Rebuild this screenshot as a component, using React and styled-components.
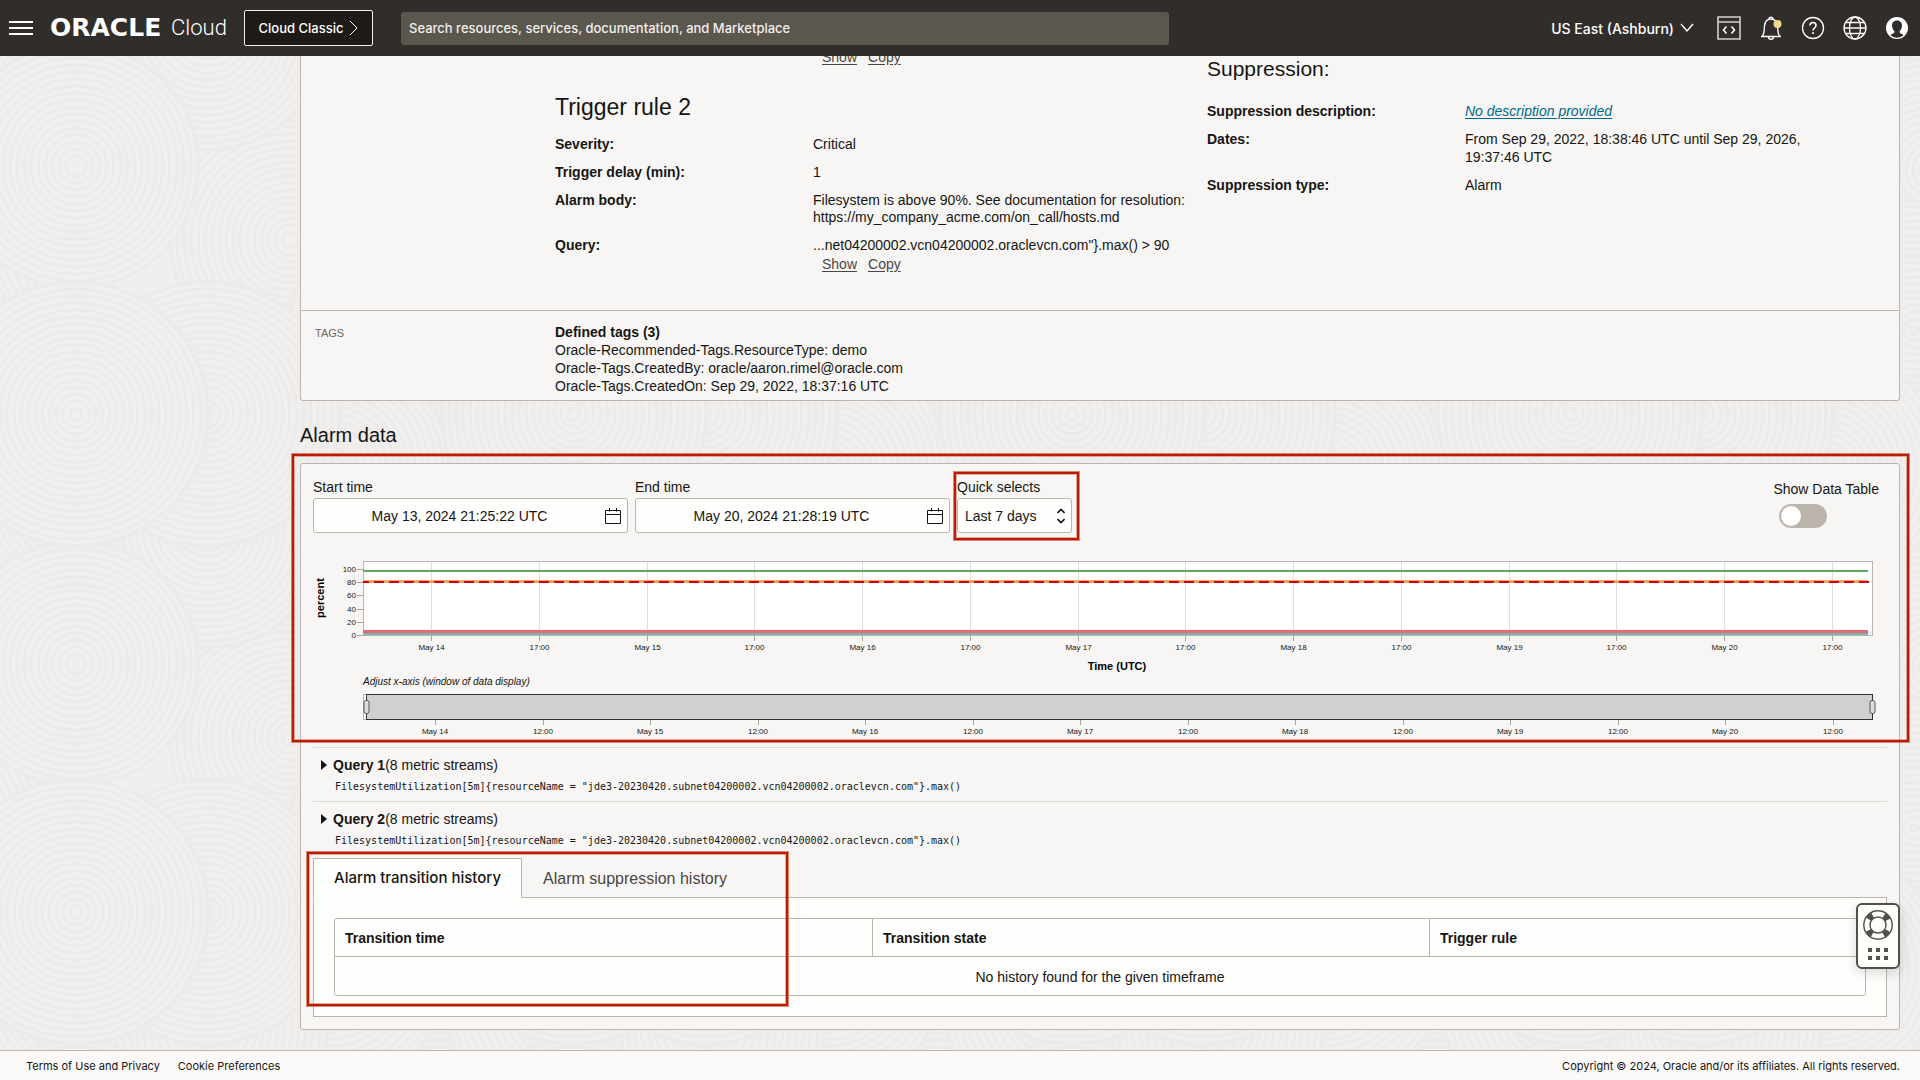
import React from "react";
import styled, { createGlobalStyle, css } from "styled-components";

const GlobalStyle = createGlobalStyle`
  *, *::before, *::after { box-sizing: border-box; }
  body {
    margin: 0;
    background: #f0efed;
    color: #161513;
    font: 14px/17px "Liberation Sans", Arial, sans-serif;
  }
  h1, h2, h3, dl, dd, p { margin: 0; font-weight: 400; }
  button, input, select { font: inherit; color: inherit; }
`;

/* ---------- page frame ---------- */

const Page = styled.div`
  position: relative;
  display: flex;
  flex-direction: column;
  min-height: 100vh;
  overflow: hidden;
`;

const Backdrop = styled.svg`
  position: absolute;
  inset: 0;
  width: 100%;
  height: 100%;
  z-index: -1;
`;

const Header = styled.header`
  position: relative;
  z-index: 2;
  display: flex;
  align-items: center;
  height: 56px;
  padding: 0 11px 0 9px;
  background: #312d2a;
  color: #ffffff;
  font: 500 13px/17px Inter, "Liberation Sans", sans-serif;
`;

const IconButton = styled.button`
  display: flex;
  padding: 0;
  border: 0;
  background: none;
  color: inherit;
  cursor: pointer;
`;

const Brand = styled.a`
  display: flex;
  align-items: center;
  gap: 7px;
  width: 178px;
  margin: 0 16px 0 17px;
  color: inherit;
  text-decoration: none;
`;

const Wordmark = styled.span`
  width: 114px;
  font: 700 25px/28px "DejaVu Sans", sans-serif;
`;

const Product = styled.span`
  font: 300 22px/28px Roboto, "Liberation Sans", sans-serif;
`;

const ClassicButton = styled.button`
  display: flex;
  align-items: center;
  justify-content: center;
  gap: 6px;
  width: 129px;
  height: 36px;
  padding: 0;
  border: 1px solid #f1efed;
  border-radius: 2px;
  background: #1e1a17;
  color: #ffffff;
  white-space: nowrap;
`;

const SearchBox = styled.input`
  flex: 0 1 768px;
  min-width: 0;
  height: 33px;
  margin-left: 28px;
  padding: 0 8px;
  border: 0;
  border-radius: 3px;
  background: #5b564e;
  color: #ffffff;
  &::placeholder { color: #f1efed; opacity: 1; }
`;

const HeaderTools = styled.div`
  display: flex;
  align-items: center;
  gap: 18px;
  margin-left: auto;
`;

const RegionButton = styled.button`
  display: flex;
  align-items: center;
  gap: 6px;
  margin-right: 5px;
  padding: 0;
  border: 0;
  background: none;
  color: inherit;
  font-size: 14px;
`;

const Main = styled.main`
  flex: 1;
  padding: 0 20px 18px 300px;
`;

const Footer = styled.footer`
  display: flex;
  align-items: center;
  gap: 18px;
  height: 30px;
  padding: 0 20px 0 26px;
  border-top: 1px solid #bbb5ae;
  background: #fbf9f8;
  color: #161513;
  font: 11px/16px Inter, sans-serif;
  a { color: inherit; text-decoration: none; }
  p { margin-left: auto; }
`;

/* ---------- details panel ---------- */

const Panel = styled.section`
  border: 1px solid #bbb5ae;
  border-radius: ${(p) => (p.$continued ? "0 0 3px 3px" : "3px")};
  background: #f7f6f4;
  ${(p) => p.$continued && css`border-top: 0; overflow: hidden;`}
  ${(p) => p.$padded && css`padding: 0 12px 12px;`}
`;

const DetailGrid = styled.div`
  display: grid;
  grid-template-columns: 240px 1fr 1fr;
  padding: 0 40px 37px 14px;
`;

const RulesColumn = styled.div`
  grid-column: 2;
`;

const RuleTitle = styled.h2`
  margin: 27px 0 15px;
  font-size: 23px;
  line-height: 28px;
`;

const SectionTitle = styled.h2`
  margin: ${(p) => p.$margin};
  font-size: ${(p) => p.$size || "20px"};
  line-height: 24px;
`;

const Facts = styled.dl`
  display: grid;
  grid-template-columns: 258px 1fr;
  row-gap: ${(p) => (p.$loose ? "10px" : "11px")};
  line-height: ${(p) => (p.$loose ? "18px" : "17px")};
  dt { font-weight: 700; }
`;

const LinkLine = styled.div`
  display: flex;
  gap: 11px;
  margin-top: ${(p) => (p.$clipped ? "-7px" : "2px")};
  padding-left: ${(p) => (p.$clipped ? "267px" : "9px")};
`;

const TextLink = styled.a`
  color: ${(p) => (p.$accent ? "#00688c" : "#4a4642")};
  font-style: ${(p) => (p.$accent ? "italic" : "normal")};
  text-decoration: underline;
  text-underline-offset: 2px;
`;

const TagsRow = styled.div`
  display: grid;
  grid-template-columns: 240px 1fr;
  padding: 12px 14px 5px;
  border-top: 1px solid #bbb5ae;
  line-height: 18px;
`;

const TagsCaption = styled.h3`
  color: #6b6661;
  font-size: 11px;
  line-height: 20px;
`;

/* ---------- alarm data panel ---------- */

const ChartRegion = styled.div`
  position: relative;
`;

const Highlight = styled.div`
  position: absolute;
  border: 2px solid #b91c00;
  box-shadow: 0 0 0 1px rgba(200, 60, 30, 0.6), inset 0 0 0 1px rgba(200, 60, 30, 0.4);
  pointer-events: none;
  z-index: 1;
  inset: ${(p) => p.$inset};
  ${(p) => p.$width && css`width: ${p.$width};`}
`;

const Controls = styled.form`
  display: flex;
  align-items: flex-start;
  gap: 7px;
  padding-top: 14px;
`;

const Field = styled.div`
  position: relative;
  display: flex;
  flex-direction: column;
  gap: 2px;
  width: ${(p) => p.$width};
  line-height: 18px;
`;

const FieldBox = styled.div`
  display: flex;
  align-items: center;
  height: 35px;
  padding: 0 6px 0 0;
  border: 1px solid #bbb5ae;
  border-radius: 3px;
  background: #fefefc;
`;

const DateInput = styled.input`
  flex: 1;
  min-width: 0;
  border: 0;
  padding: 0;
  background: none;
  text-align: center;
  outline: none;
`;

const QuickSelect = styled.select`
  flex: 1;
  min-width: 0;
  appearance: none;
  border: 0;
  padding: 0 0 0 7px;
  background: none;
  outline: none;
`;

const ToggleField = styled.label`
  display: flex;
  flex-direction: column;
  gap: 6px;
  margin: 2px 8px 0 auto;
  line-height: 18px;
`;

const Toggle = styled.input`
  appearance: none;
  display: block;
  width: 48px;
  height: 24px;
  margin: 0 0 0 6px;
  padding: 2px;
  border-radius: 12px;
  background: #bbb5ae;
  &::before {
    content: "";
    display: block;
    width: 20px;
    height: 20px;
    border-radius: 50%;
    background: #ffffff;
  }
`;

const Chart = styled.svg`
  display: block;
  width: 100%;
  height: auto;
  font-family: "Liberation Sans", Arial, sans-serif;
`;

const QueryBlock = styled.div`
  padding: 8px 8px 7px;
  border-top: 1px solid #dcd9d5;
`;

const QueryToggle = styled.button`
  display: flex;
  align-items: center;
  padding: 0;
  border: 0;
  background: none;
  line-height: 18px;
  svg { margin-right: 6px; }
`;

const QueryCode = styled.code`
  display: block;
  margin-top: 6px;
  padding-left: 14px;
  font: 10px/14px "DejaVu Sans Mono", monospace;
`;

const TabRegion = styled.div`
  position: relative;
  margin-top: 3px;
`;

const TabList = styled.div`
  display: flex;
  position: relative;
`;

const Tab = styled.button`
  height: 40px;
  margin-bottom: -1px;
  padding: 0 20px;
  border: 1px solid transparent;
  background: none;
  color: #4a4642;
  font-size: 16px;
  ${(p) =>
    p.$active &&
    css`
      border-color: #bbb5ae;
      border-bottom-color: #fefefc;
      background: #fefefc;
      color: #161513;
      font: 500 15px/18px Inter, "Liberation Sans", sans-serif;
    `}
`;

const TabPanel = styled.div`
  padding: 20px;
  border: 1px solid #bbb5ae;
  background: #fefefc;
`;

const HistoryTable = styled.table`
  width: 100%;
  border: 1px solid #bbb5ae;
  border-radius: 3px;
  border-spacing: 0;
  table-layout: fixed;
  th, td { height: 38px; padding: 2px 10px 0; }
  th {
    border-bottom: 1px solid #bbb5ae;
    text-align: left;
  }
  th + th { border-left: 1px solid #bbb5ae; }
  td { text-align: center; }
`;

const SupportWidget = styled.aside`
  position: fixed;
  right: 20px;
  bottom: 111px;
  z-index: 3;
  display: flex;
  flex-direction: column;
  align-items: center;
  gap: 8px;
  width: 44px;
  height: 66px;
  padding-top: 5px;
  border: 2px solid #524f4b;
  border-radius: 6px;
  background: #fefefc;
  box-shadow: 0 4px 12px rgba(0, 0, 0, 0.15);
  color: #524f4b;
`;

/* ---------- drawings ---------- */

const TILE = 498;
const SWIRLS = [
  [330, 40, 130], [440, 170, 140], [290, 240, 120], [0, 290, 110],
  [420, 330, 130], [330, 470, 120], [76, 0, 130], [207, 30, 120],
  [76, 166, 122], [207, 414, 132], [76, 414, 132],
];

function Swirl({ cx, cy, r }) {
  const rings = [];
  for (let k = r; k > 3; k -= 7) rings.push(k);
  return (
    <g fill="none" stroke="#ecebe9" strokeWidth="3">
      <circle cx={cx} cy={cy} r={r} fill="#f0efed" />
      {rings.map((k) => <circle key={k} cx={cx} cy={cy} r={k} />)}
    </g>
  );
}

function SwirlBackdrop() {
  return (
    <Backdrop aria-hidden="true">
      <defs>
        <pattern id="swirls" width={TILE} height={TILE} patternUnits="userSpaceOnUse">
          {SWIRLS.map(([x, y, r]) =>
            [-TILE, 0, TILE].map((dx) =>
              [-TILE, 0, TILE].map((dy) => (
                <Swirl key={`${x}${y}${dx}${dy}`} cx={x + dx} cy={y + dy} r={r} />
              ))
            )
          )}
        </pattern>
      </defs>
      <rect width="100%" height="100%" fill="url(#swirls)" />
    </Backdrop>
  );
}

const MenuIcon = () => (
  <svg width="24" height="16" stroke="currentColor" strokeWidth="2">
    <path d="M0 2H24M0 8H24M0 14H24" />
  </svg>
);

const ChevronRight = () => (
  <svg width="9" height="16" fill="none" stroke="currentColor">
    <path d="M1 1L8 8L1 15" />
  </svg>
);

const ChevronDown = () => (
  <svg width="14" height="10" fill="none" stroke="currentColor" strokeWidth="1.4">
    <path d="M1 1L7 8L13 1" />
  </svg>
);

const DevToolsIcon = () => (
  <svg width="24" height="24" fill="none" stroke="#d4d1cd" strokeWidth="1.6">
    <path d="M1 1H23V23H1ZM1 6H23" />
    <path d="M9.5 10.5L6.5 14L9.5 17.5M14.5 10.5L17.5 14L14.5 17.5" stroke="#fff" />
  </svg>
);

const BellIcon = () => (
  <svg width="24" height="24" fill="none" stroke="currentColor" strokeWidth="1.3">
    <path d="M2 20.500H22M3 20.500C5.500 18 5 15 5.500 10C6 5.500 8.500 3 12 3S18 5.500 18.500 10C19 15 18.500 18 21 20.500M10 3C10 0.500 14 0.500 14 3M9.500 21C9.500 24 14.500 24 14.500 21" />
    <circle cx="18.500" cy="8" r="4" fill="#f8d68f" stroke="none" />
  </svg>
);

const HelpIcon = () => (
  <svg width="24" height="24" fill="none" stroke="currentColor" strokeWidth="1.3">
    <circle cx="12" cy="12" r="10.500" />
    <path d="M9 9.500C9 5.500 15 5.500 15 9.500C15 12 12 12 12 14.500" strokeWidth="1.6" />
    <circle cx="12" cy="17" r="1" fill="currentColor" stroke="none" />
  </svg>
);

const GlobeIcon = () => (
  <svg width="24" height="24" fill="none" stroke="currentColor" strokeWidth="1.3">
    <circle cx="12" cy="12" r="11" />
    <ellipse cx="12" cy="12" rx="5.500" ry="11" />
    <path d="M1 12H23M3 6.500H21M3 17.500H21" />
  </svg>
);

const AvatarIcon = () => (
  <svg width="24" height="24">
    <circle cx="12" cy="12" r="11" fill="#fff" />
    <path d="M12 4.500C8.500 4.500 7 7 7 9.500C7 12.500 8.500 14.500 9.500 15.500C9.500 17.500 7.500 17.500 5.500 19C9 22.500 15 22.500 18.500 19C16.500 17.500 14.500 17.500 14.500 15.500C15.500 14.500 17 12.500 17 9.500C17 7 15.500 4.500 12 4.500Z" fill="#312d2a" />
  </svg>
);

const CalendarIcon = () => (
  <svg width="16" height="16" fill="none" stroke="currentColor">
    <path d="M0.500 2.500H15.500V15.500H0.500ZM0.500 6.500H15.500M4.500 0V3.500M11.500 0V3.500" />
  </svg>
);

const UpDownIcon = () => (
  <svg width="8" height="16" fill="none" stroke="currentColor" strokeWidth="1.6">
    <path d="M0.500 5L4 1.500L7.500 5M0.500 11L4 14.500L7.500 11" />
  </svg>
);

const TriangleIcon = () => (
  <svg width="6" height="10"><path d="M0 0L6 5L0 10Z" fill="currentColor" /></svg>
);

const LifebuoyIcon = () => (
  <svg width="30" height="30" fill="none" stroke="currentColor">
    <circle cx="15" cy="15" r="11" strokeWidth="6" strokeDasharray="5.600 11.680" strokeDashoffset="-5.840" />
    <circle cx="15" cy="15" r="14.200" strokeWidth="1.400" />
    <circle cx="15" cy="15" r="8" strokeWidth="1.400" />
  </svg>
);

const DotsIcon = () => (
  <svg width="20" height="12" fill="currentColor">
    {[0, 8, 16].map((x) => [0, 8].map((y) => <rect key={`${x}-${y}`} x={x} y={y} width="4" height="4" />))}
  </svg>
);

/* ---------- chart ---------- */

const DAYS = ["May 14", "May 15", "May 16", "May 17", "May 18", "May 19", "May 20"];
const PLOT = { left: 50, right: 1559, end: 1555, top: 28, bottom: 102 };

const axisTicks = (start, step, noon) =>
  DAYS.flatMap((day, i) => [
    { label: day, x: Math.round(start + 2 * i * step) },
    { label: noon, x: Math.round(start + (2 * i + 1) * step) },
  ]);

const mainTicks = axisTicks(118, 107.75, "17:00");
const brushTicks = axisTicks(122, 107.5, "12:00");
const percentTicks = [[100, 36], [80, 49], [60, 62], [40, 76], [20, 89], [0, 102]];

function AlarmChart() {
  const { left, right, end, top, bottom } = PLOT;
  return (
    <Chart viewBox="0 0 1574 214" role="img" aria-label="Alarm data">
      <rect x={left + 0.5} y={top + 0.5} width={right - left} height={bottom - top} fill="#fff" stroke="#bbb5ae" />
      <g fontSize="8" fill="#161513">
        {mainTicks.map((t) => (
          <g key={t.x}>
            <path d={`M${t.x + 0.5} ${top + 1}V${bottom}`} stroke="#e0dfdd" />
            <path d={`M${t.x + 0.5} ${bottom}V${bottom + 6}`} stroke="#aaa59f" />
            <text x={t.x + 0.5} y="117" textAnchor="middle">{t.label}</text>
          </g>
        ))}
        {percentTicks.map(([value, y]) => (
          <g key={value}>
            <path d={`M44 ${y + 0.5}H${left}`} stroke="#aaa59f" />
            <text x="43" y={y + 3} textAnchor="end">{value}</text>
          </g>
        ))}
      </g>
      <path d={`M${left} 38H${end}`} stroke="#5cab5a" strokeWidth="2" />
      <path d={`M${left} 48.500H${end}`} stroke="#f3ab62" strokeWidth="3" />
      <path d={`M${left} 49H${end + 1}`} stroke="#d0021b" strokeWidth="2" strokeDasharray="10 5" strokeDashoffset="4" />
      <path d={`M${left} 98.500H${end}`} stroke="#e5696f" strokeWidth="3" />
      <path d={`M${left} 101H${end}`} stroke="#76b7b2" strokeWidth="2" />
      <g fontSize="11" fontWeight="700" fill="#000" textAnchor="middle">
        <text transform="translate(11 65) rotate(-90)">percent</text>
        <text x="804" y="137">Time (UTC)</text>
      </g>
      <text x={left} y="152" fontSize="10" fontStyle="italic" fill="#161513">Adjust x-axis (window of data display)</text>

      <rect x={left + 0.5} y="161.500" width={right - left} height="25" fill="#fff" stroke="#bbb5ae" />
      <rect x="53.500" y="161.500" width="1506" height="25" fill="#d1d0ce" stroke="#333" />
      {[53, 1559].map((x) => (
        <rect key={x} x={x - 2} y="167.500" width="5" height="13" rx="2" fill="#ddd" stroke="#555" />
      ))}
      <g fontSize="8" fill="#161513">
        {brushTicks.map((t) => (
          <g key={t.x}>
            <path d={`M${t.x + 0.5} 187V192`} stroke="#aaa59f" />
            <text x={t.x} y="201" textAnchor="middle">{t.label}</text>
          </g>
        ))}
      </g>
    </Chart>
  );
}

/* ---------- pieces ---------- */

function ShowCopy({ clipped }) {
  return (
    <LinkLine $clipped={clipped}>
      <TextLink href="#show">Show</TextLink>
      <TextLink href="#copy">Copy</TextLink>
    </LinkLine>
  );
}

function DateField({ id, label, value }) {
  return (
    <Field $width="315px">
      <label htmlFor={id}>{label}</label>
      <FieldBox>
        <DateInput id={id} type="text" defaultValue={value} />
        <CalendarIcon />
      </FieldBox>
    </Field>
  );
}

const QUERY =
  'FilesystemUtilization[5m]{resourceName = "jde3-20230420.subnet04200002.vcn04200002.oraclevcn.com"}.max()';

function Query({ name }) {
  return (
    <QueryBlock>
      <QueryToggle type="button" aria-expanded="false">
        <TriangleIcon />
        <b>{name}</b>(8 metric streams)
      </QueryToggle>
      <QueryCode>{QUERY}</QueryCode>
    </QueryBlock>
  );
}

export default function App() {
  return (
    <Page>
      <GlobalStyle />
      <SwirlBackdrop />
      <Header>
        <IconButton aria-label="Navigation menu"><MenuIcon /></IconButton>
        <Brand href="#home">
          <Wordmark>ORACLE</Wordmark>
          <Product>Cloud</Product>
        </Brand>
        <ClassicButton type="button">Cloud Classic <ChevronRight /></ClassicButton>
        <SearchBox
          type="search"
          aria-label="Search"
          placeholder="Search resources, services, documentation, and Marketplace"
        />
        <HeaderTools>
          <RegionButton type="button">US East (Ashburn) <ChevronDown /></RegionButton>
          <IconButton aria-label="Developer tools"><DevToolsIcon /></IconButton>
          <IconButton aria-label="Announcements"><BellIcon /></IconButton>
          <IconButton aria-label="Help"><HelpIcon /></IconButton>
          <IconButton aria-label="Language"><GlobeIcon /></IconButton>
          <IconButton aria-label="Profile"><AvatarIcon /></IconButton>
        </HeaderTools>
      </Header>

      <Main>
        <Panel $continued>
          <DetailGrid>
            <RulesColumn>
              <ShowCopy clipped />
              <RuleTitle>Trigger rule 2</RuleTitle>
              <Facts>
                <dt>Severity:</dt>
                <dd>Critical</dd>
                <dt>Trigger delay (min):</dt>
                <dd>1</dd>
                <dt>Alarm body:</dt>
                <dd>
                  Filesystem is above 90%. See documentation for resolution:
                  <br />
                  https://my_company_acme.com/on_call/hosts.md
                </dd>
                <dt>Query:</dt>
                <dd>
                  ...net04200002.vcn04200002.oraclevcn.com"{"}"}.max() &gt; 90
                  <ShowCopy />
                </dd>
              </Facts>
            </RulesColumn>
            <div>
              <SectionTitle $margin="1px 0 21px" $size="21px">Suppression:</SectionTitle>
              <Facts $loose>
                <dt>Suppression description:</dt>
                <dd><TextLink href="#description" $accent>No description provided</TextLink></dd>
                <dt>Dates:</dt>
                <dd>
                  From Sep 29, 2022, 18:38:46 UTC until Sep 29, 2026,
                  <br />
                  19:37:46 UTC
                </dd>
                <dt>Suppression type:</dt>
                <dd>Alarm</dd>
              </Facts>
            </div>
          </DetailGrid>
          <TagsRow>
            <TagsCaption>TAGS</TagsCaption>
            <div>
              <b>Defined tags (3)</b>
              <p>Oracle-Recommended-Tags.ResourceType: demo</p>
              <p>Oracle-Tags.CreatedBy: oracle/aaron.rimel@oracle.com</p>
              <p>Oracle-Tags.CreatedOn: Sep 29, 2022, 18:37:16 UTC</p>
            </div>
          </TagsRow>
        </Panel>

        <SectionTitle $margin="22px 0 16px">Alarm data</SectionTitle>
        <Panel $padded>
          <ChartRegion>
            <Highlight $inset="-10px -22px 5px -21px" />
            <Controls>
              <DateField id="start" label="Start time" value="May 13, 2024 21:25:22 UTC" />
              <DateField id="end" label="End time" value="May 20, 2024 21:28:19 UTC" />
              <Field $width="115px">
                <Highlight $inset="-6px -7px -7px -3px" />
                <label htmlFor="quick">Quick selects</label>
                <FieldBox>
                  <QuickSelect id="quick" defaultValue="Last 7 days">
                    <option>Last 7 days</option>
                  </QuickSelect>
                  <UpDownIcon />
                </FieldBox>
              </Field>
              <ToggleField>
                Show Data Table
                <Toggle type="checkbox" />
              </ToggleField>
            </Controls>
            <AlarmChart />
          </ChartRegion>
          <Query name="Query 1" />
          <Query name="Query 2" />
          <TabRegion>
            <Highlight $inset="-6px auto 11px -6px" $width="481px" />
            <TabList role="tablist">
              <Tab role="tab" aria-selected="true" $active>Alarm transition history</Tab>
              <Tab role="tab" aria-selected="false">Alarm suppression history</Tab>
            </TabList>
            <TabPanel role="tabpanel">
              <HistoryTable>
                <colgroup>
                  <col style={{ width: "35.1%" }} />
                  <col style={{ width: "36.4%" }} />
                  <col />
                </colgroup>
                <thead>
                  <tr>
                    <th>Transition time</th>
                    <th>Transition state</th>
                    <th>Trigger rule</th>
                  </tr>
                </thead>
                <tbody>
                  <tr>
                    <td colSpan="3">No history found for the given timeframe</td>
                  </tr>
                </tbody>
              </HistoryTable>
            </TabPanel>
          </TabRegion>
        </Panel>
      </Main>

      <Footer>
        <a href="#terms">Terms of Use and Privacy</a>
        <a href="#cookies">Cookie Preferences</a>
        <p>Copyright © 2024, Oracle and/or its affiliates. All rights reserved.</p>
      </Footer>

      <SupportWidget>
        <IconButton aria-label="Support"><LifebuoyIcon /></IconButton>
        <DotsIcon />
      </SupportWidget>
    </Page>
  );
}
